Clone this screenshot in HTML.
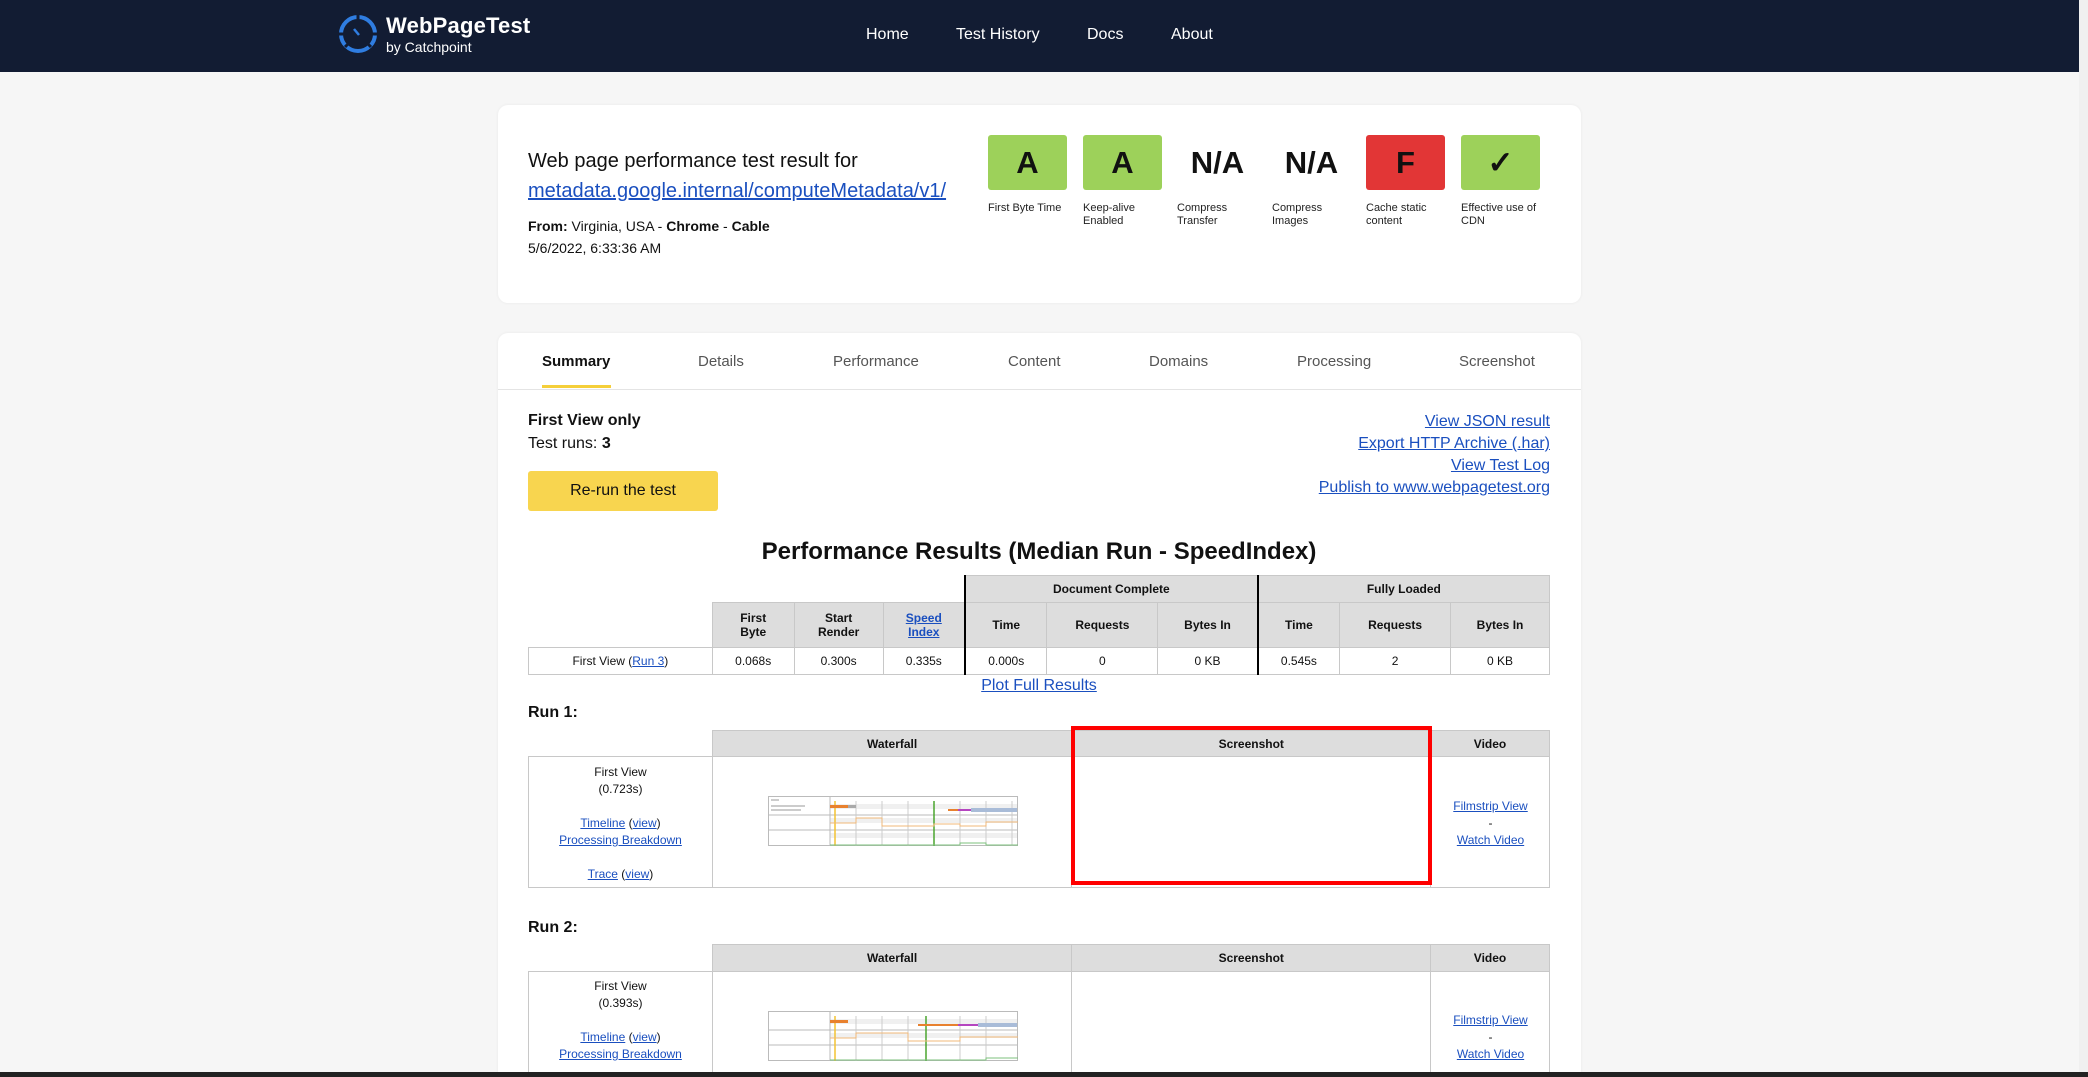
<!DOCTYPE html>
<html style="width:2088px;height:1077px;overflow:hidden"><head><meta charset="utf-8">
<style>
*{margin:0;padding:0;box-sizing:border-box}
body{width:2088px;height:1077px;overflow:hidden;background:#f6f6f6;font-family:"Liberation Sans",Arial,sans-serif;color:#111;position:relative}
#w{position:relative;width:2088px;height:1077px;overflow:hidden}
.a{position:absolute}
a{color:#1a4fbf;text-decoration:underline}
.hdr{left:0;top:0;width:2088px;height:72px;background:#121c33}
.nav{color:#fff;font-size:16px;top:26px}
.card{background:#fff;border-radius:10px;box-shadow:0 0 3px rgba(0,0,0,.06)}
.g{width:79px;height:55px;top:135px;border-radius:3px;font-weight:bold;font-size:31px;text-align:center;line-height:55px;color:#111}
.gl{top:202px;font-size:11px;line-height:13px;color:#222;width:90px}
.tab{top:353px;font-size:15px;color:#555}
table{border-collapse:collapse;font-size:12px}
td,th{border:1px solid #c8c8c8;text-align:center}
th{background:#ddd;font-weight:bold}
.c{text-align:center;font-size:12px;line-height:17px}
</style></head><body><div id="w">
<div class="a hdr"></div>
<svg class="a" style="left:338px;top:14px" width="40" height="40" viewBox="0 0 40 40">
<circle cx="20" cy="20" r="17" fill="none" stroke="#2f7de1" stroke-width="4"/>
<g stroke="#121c33" stroke-width="3"><line x1="20" y1="1" x2="20" y2="6"/><line x1="1" y1="20" x2="6" y2="20"/><line x1="34" y1="20" x2="39" y2="20"/><line x1="7" y1="33" x2="10" y2="30"/><line x1="33" y1="33" x2="30" y2="30"/></g>
<line x1="16" y1="15" x2="21" y2="21" stroke="#2f7de1" stroke-width="2.5"/>
</svg>
<div class="a" style="left:386px;top:13px;color:#fff;font-weight:bold;font-size:22px;letter-spacing:.2px">WebPageTest</div>
<div class="a" style="left:386px;top:39px;color:#fff;font-size:14px">by Catchpoint</div>
<div class="a nav" style="left:866px">Home</div>
<div class="a nav" style="left:956px">Test History</div>
<div class="a nav" style="left:1087px">Docs</div>
<div class="a nav" style="left:1171px">About</div>

<div class="a card" style="left:498px;top:105px;width:1083px;height:198px"></div>
<div class="a" style="left:528px;top:150px;font-size:20px">Web page performance test result for</div>
<div class="a" style="left:528px;top:180px;font-size:20px"><a>metadata.google.internal/computeMetadata/v1/</a></div>
<div class="a" style="left:528px;top:218px;font-size:14px"><b>From:</b> Virginia, USA - <b>Chrome</b> - <b>Cable</b></div>
<div class="a" style="left:528px;top:240px;font-size:14px">5/6/2022, 6:33:36 AM</div>

<div class="a g" style="left:988px;background:#9dd15a">A</div>
<div class="a g" style="left:1083px;background:#9dd15a">A</div>
<div class="a g" style="left:1178px">N/A</div>
<div class="a g" style="left:1272px">N/A</div>
<div class="a g" style="left:1366px;background:#e23636">F</div>
<div class="a g" style="left:1461px;background:#9dd15a">✓</div>
<div class="a gl" style="left:988px">First Byte Time</div>
<div class="a gl" style="left:1083px">Keep-alive<br>Enabled</div>
<div class="a gl" style="left:1177px">Compress<br>Transfer</div>
<div class="a gl" style="left:1272px">Compress<br>Images</div>
<div class="a gl" style="left:1366px">Cache static<br>content</div>
<div class="a gl" style="left:1461px">Effective use of<br>CDN</div>

<div class="a card" style="left:498px;top:333px;width:1083px;height:760px"></div>
<div class="a" style="left:498px;top:389px;width:1083px;height:1px;background:#e4e4e4"></div>
<div class="a tab" style="left:542px;color:#111;font-weight:bold">Summary</div>
<div class="a" style="left:542px;top:385px;width:69px;height:3px;background:#f5cf3a"></div>
<div class="a tab" style="left:698px">Details</div>
<div class="a tab" style="left:833px">Performance</div>
<div class="a tab" style="left:1008px">Content</div>
<div class="a tab" style="left:1149px">Domains</div>
<div class="a tab" style="left:1297px">Processing</div>
<div class="a tab" style="left:1459px">Screenshot</div>

<div class="a" style="left:528px;top:412px;font-size:16px;font-weight:bold">First View only</div>
<div class="a" style="left:528px;top:435px;font-size:16px">Test runs: <b>3</b></div>
<div class="a" style="left:528px;top:471px;width:190px;height:40px;background:#f8d54f;border-radius:3px;font-size:16px;text-align:center;line-height:40px">Re-run the test</div>
<div class="a" style="right:538px;top:411px;font-size:16px;text-align:right;line-height:22px"><a>View JSON result</a><br><a>Export HTTP Archive (.har)</a><br><a>View Test Log</a><br><a>Publish to www.webpagetest.org</a></div>

<div class="a" style="left:528px;top:538px;width:1022px;text-align:center;font-size:24px;font-weight:bold">Performance Results (Median Run - SpeedIndex)</div>
<table class="a" style="left:528px;top:575px;width:1022px">
<colgroup><col style="width:184px"><col style="width:82px"><col style="width:89px"><col style="width:82px"><col style="width:82px"><col style="width:111px"><col style="width:100px"><col style="width:82px"><col style="width:111px"><col style="width:99px"></colgroup>
<tr style="height:27px"><td colspan="4" style="border:none;background:transparent"></td><th colspan="3" style="border-left:2px solid #000">Document Complete</th><th colspan="3" style="border-left:2px solid #000">Fully Loaded</th></tr>
<tr style="height:45px"><td style="border:none;border-bottom:1px solid #c8c8c8"></td><th>First<br>Byte</th><th>Start<br>Render</th><th><a>Speed<br>Index</a></th><th style="border-left:2px solid #000">Time</th><th>Requests</th><th>Bytes In</th><th style="border-left:2px solid #000">Time</th><th>Requests</th><th>Bytes In</th></tr>
<tr style="height:27px"><td>First View (<a>Run 3</a>)</td><td>0.068s</td><td>0.300s</td><td>0.335s</td><td style="border-left:2px solid #000">0.000s</td><td>0</td><td>0 KB</td><td style="border-left:2px solid #000">0.545s</td><td>2</td><td>0 KB</td></tr>
</table>
<div class="a" style="left:528px;top:677px;width:1022px;text-align:center;font-size:16px"><a>Plot Full Results</a></div>

<div class="a" style="left:528px;top:704px;font-size:16px;font-weight:bold">Run 1:</div>
<table class="a" style="left:528px;top:730px;width:1022px">
<colgroup><col style="width:184px"><col style="width:360px"><col style="width:359px"><col style="width:119px"></colgroup>
<tr style="height:26px"><td style="border:none;border-bottom:1px solid #c8c8c8"></td><th>Waterfall</th><th>Screenshot</th><th>Video</th></tr>
<tr style="height:131px"><td></td><td></td><td></td><td></td></tr>
</table>
<div class="a" style="left:1071px;top:726px;width:361px;height:159px;border:4px solid #f00"></div>
<div class="a c" style="left:529px;top:764px;width:183px">First View<br>(0.723s)<br><br><a>Timeline</a> (<a>view</a>)<br><a>Processing Breakdown</a><br><br><a>Trace</a> (<a>view</a>)</div>
<div class="a c" style="left:1431px;top:798px;width:119px"><a>Filmstrip View</a><br>-<br><a>Watch Video</a></div>

<div class="a" style="left:528px;top:919px;font-size:16px;font-weight:bold">Run 2:</div>
<table class="a" style="left:528px;top:944px;width:1022px">
<colgroup><col style="width:184px"><col style="width:360px"><col style="width:359px"><col style="width:119px"></colgroup>
<tr style="height:27px"><td style="border:none;border-bottom:1px solid #c8c8c8"></td><th>Waterfall</th><th>Screenshot</th><th>Video</th></tr>
<tr style="height:131px"><td></td><td></td><td></td><td></td></tr>
</table>
<div class="a c" style="left:529px;top:978px;width:183px">First View<br>(0.393s)<br><br><a>Timeline</a> (<a>view</a>)<br><a>Processing Breakdown</a></div>
<div class="a c" style="left:1431px;top:1012px;width:119px"><a>Filmstrip View</a><br>-<br><a>Watch Video</a></div>

<svg class="a" style="left:768px;top:796px" width="250" height="50" viewBox="0 0 250 50">
<rect x="0.5" y="0.5" width="249" height="49" fill="#fff" stroke="#bbb"/>
<rect x="62" y="8" width="187" height="5" fill="#f0f0f0"/><rect x="62" y="22" width="187" height="5" fill="#f0f0f0"/><rect x="62" y="37" width="187" height="5" fill="#f0f0f0"/>
<line x1="62" y1="0" x2="62" y2="50" stroke="#bbb"/><line x1="0" y1="19" x2="250" y2="19" stroke="#bbb"/><line x1="0" y1="34" x2="250" y2="34" stroke="#bbb"/>
<g stroke="#ccc"><line x1="88" y1="5" x2="88" y2="50"/><line x1="114" y1="5" x2="114" y2="50"/><line x1="140" y1="5" x2="140" y2="50"/><line x1="192" y1="5" x2="192" y2="50"/><line x1="218" y1="5" x2="218" y2="50"/><line x1="244" y1="5" x2="244" y2="50"/></g>
<line x1="67" y1="5" x2="67" y2="50" stroke="#f3c233" stroke-width="1.5"/><line x1="166" y1="5" x2="166" y2="50" stroke="#4ba52f" stroke-width="1.5"/>
<rect x="62" y="9" width="18" height="3" fill="#e8812e"/><rect x="80" y="9" width="8" height="3" fill="#aaa"/>
<rect x="180" y="13" width="10" height="2" fill="#e8812e"/><rect x="190" y="13" width="13" height="2" fill="#b546c0"/><rect x="203" y="12" width="46" height="4" fill="#a9bcd8"/>
<polyline points="62,27 88,27 88,22 114,22 114,30 166,30 166,28 192,28 192,30 218,30 218,26 250,26" fill="none" stroke="#f0b878"/>
<polyline points="62,49 192,49 192,47 218,47 218,49 250,49" fill="none" stroke="#7cc07c"/>
<g fill="#ccc"><rect x="3" y="3" width="8" height="2"/><rect x="3" y="9" width="34" height="2"/><rect x="3" y="13" width="30" height="2"/></g>
</svg>
<svg class="a" style="left:768px;top:1011px" width="250" height="50" viewBox="0 0 250 50">
<rect x="0.5" y="0.5" width="249" height="49" fill="#fff" stroke="#bbb"/>
<rect x="62" y="8" width="187" height="5" fill="#f0f0f0"/><rect x="62" y="22" width="187" height="5" fill="#f0f0f0"/>
<line x1="62" y1="0" x2="62" y2="50" stroke="#bbb"/><line x1="0" y1="19" x2="250" y2="19" stroke="#bbb"/><line x1="0" y1="34" x2="250" y2="34" stroke="#bbb"/>
<g stroke="#ccc"><line x1="88" y1="5" x2="88" y2="50"/><line x1="114" y1="5" x2="114" y2="50"/><line x1="140" y1="5" x2="140" y2="50"/><line x1="192" y1="5" x2="192" y2="50"/><line x1="218" y1="5" x2="218" y2="50"/></g>
<line x1="67" y1="5" x2="67" y2="50" stroke="#f3c233" stroke-width="1.5"/><line x1="158" y1="5" x2="158" y2="50" stroke="#4ba52f" stroke-width="1.5"/>
<rect x="62" y="9" width="18" height="3" fill="#e8812e"/><rect x="150" y="13" width="40" height="2" fill="#e8812e"/><rect x="190" y="13" width="20" height="2" fill="#b546c0"/><rect x="210" y="12" width="39" height="4" fill="#a9bcd8"/>
<polyline points="62,27 88,27 88,22 140,22 140,30 192,30 192,26 250,26" fill="none" stroke="#f0b878"/>
<polyline points="62,49 218,49 218,47 250,47" fill="none" stroke="#7cc07c"/>
</svg>

<div class="a" style="left:2079px;top:0;width:9px;height:1077px;background:#f0f0f0"></div>
<div class="a" style="left:0;top:1072px;width:2088px;height:5px;background:#222"></div>
</div></body></html>
